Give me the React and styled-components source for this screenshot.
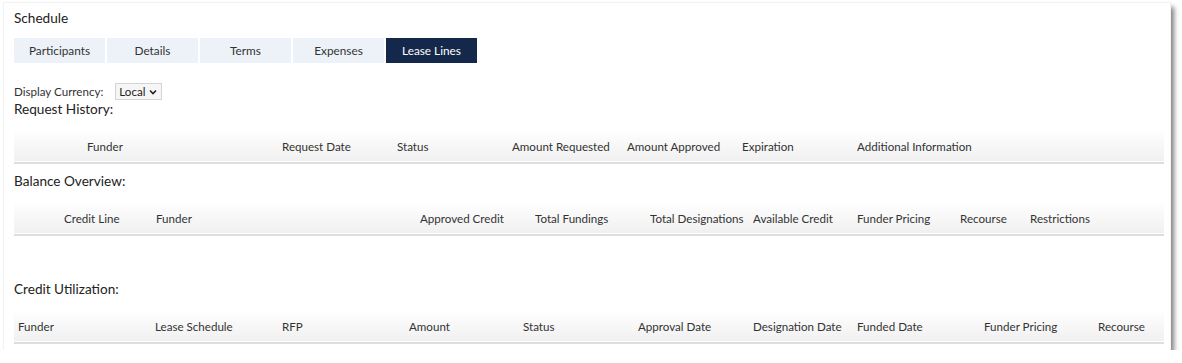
import React from "react";
import styled, { createGlobalStyle } from "styled-components";

const GlobalStyle = createGlobalStyle`
  body {
    margin: 0;
    background: #fff;
    font-family: Lato, "Open Sans", Arial, sans-serif;
    color: #333;
  }
`;

const Card = styled.div`
  margin: 3px 0 0 4px;
  width: 1166px;
  height: 347px;
  box-sizing: border-box;
  padding: 5px 6px 6px 10px;
  background: #fff;
  box-shadow: 0 0 0 1px #f3f3f3, 4px 4px 5px rgba(0, 0, 0, 0.5);
`;

const Title = styled.div`
  font-size: 13.6px;
  line-height: 20px;
  color: #222;
`;

const Tabs = styled.div`
  display: flex;
  gap: 2px;
  margin-top: 10px;
`;

const Tab = styled.div`
  width: 91px;
  height: 25px;
  display: flex;
  align-items: center;
  justify-content: center;
  font-size: 11.8px;
  background: ${(p) => (p.$active ? "#13284a" : "#edf2f8")};
  color: ${(p) => (p.$active ? "#fff" : "#333")};
`;

const CurrencyRow = styled.div`
  display: flex;
  align-items: center;
  margin-top: 20px;
  height: 17px;
  font-size: 11.6px;
  color: #333;
`;

const SelectBox = styled.div`
  margin-left: 12px;
  height: 17px;
  box-sizing: border-box;
  padding: 0 4px 0 3px;
  display: flex;
  align-items: center;
  gap: 4px;
  border: 1px solid #d4d4d4;
  background: #f6f6f6;
  font-size: 11.6px;
  color: #222;
`;

const SectionTitle = styled.div`
  font-size: 13.6px;
  line-height: 18px;
  color: #222;
  margin-top: ${(p) => p.$top || 0}px;
`;

const Table = styled.table`
  width: 1150px;
  margin-top: 12px;
  border-collapse: collapse;
  table-layout: fixed;
`;

const HeadRow = styled.tr`
  background: linear-gradient(#ffffff, #f0f0f0);
  border-bottom: 2px solid #dedede;
`;

const Th = styled.th`
  height: 32px;
  padding: 0 0 0 ${(p) => p.$pad || 0}px;
  text-align: left;
  font-weight: normal;
  font-size: 11.6px;
  color: #333;
  white-space: nowrap;
  overflow: hidden;
`;

const HeaderTable = ({ columns }) => (
  <Table>
    <colgroup>
      {columns.map((c, i) => (
        <col key={i} style={c.width ? { width: c.width } : undefined} />
      ))}
    </colgroup>
    <thead>
      <HeadRow>
        {columns.map((c, i) => (
          <Th key={i} $pad={c.pad}>
            {c.label}
          </Th>
        ))}
      </HeadRow>
    </thead>
  </Table>
);

const requestCols = [
  { label: "Funder", width: 268, pad: 73 },
  { label: "Request Date", width: 115 },
  { label: "Status", width: 115 },
  { label: "Amount Requested", width: 115 },
  { label: "Amount Approved", width: 115 },
  { label: "Expiration", width: 115 },
  { label: "Additional Information" },
];

const balanceCols = [
  { label: "Credit Line", width: 142, pad: 50 },
  { label: "Funder", width: 264 },
  { label: "Approved Credit", width: 115 },
  { label: "Total Fundings", width: 115 },
  { label: "Total Designations", width: 103 },
  { label: "Available Credit", width: 104 },
  { label: "Funder Pricing", width: 103 },
  { label: "Recourse", width: 70 },
  { label: "Restrictions" },
];

const utilCols = [
  { label: "Funder", width: 141, pad: 4 },
  { label: "Lease Schedule", width: 127 },
  { label: "RFP", width: 127 },
  { label: "Amount", width: 114 },
  { label: "Status", width: 115 },
  { label: "Approval Date", width: 115 },
  { label: "Designation Date", width: 104 },
  { label: "Funded Date", width: 127 },
  { label: "Funder Pricing", width: 114 },
  { label: "Recourse" },
];

const tabs = ["Participants", "Details", "Terms", "Expenses", "Lease Lines"];

export default function App() {
  return (
    <>
      <GlobalStyle />
      <Card>
        <Title>Schedule</Title>
        <Tabs>
          {tabs.map((t) => (
            <Tab key={t} $active={t === "Lease Lines"}>
              {t}
            </Tab>
          ))}
        </Tabs>
        <CurrencyRow>
          Display Currency:
          <SelectBox>
            Local
            <svg width="8" height="6" viewBox="0 0 8 6">
              <path d="M1 1.5 L4 4.5 L7 1.5" fill="none" stroke="#222" strokeWidth="1.6" />
            </svg>
          </SelectBox>
        </CurrencyRow>
        <SectionTitle>Request History:</SectionTitle>
        <HeaderTable columns={requestCols} />
        <SectionTitle $top={8}>Balance Overview:</SectionTitle>
        <HeaderTable columns={balanceCols} />
        <SectionTitle $top={44}>Credit Utilization:</SectionTitle>
        <HeaderTable columns={utilCols} />
      </Card>
    </>
  );
}
